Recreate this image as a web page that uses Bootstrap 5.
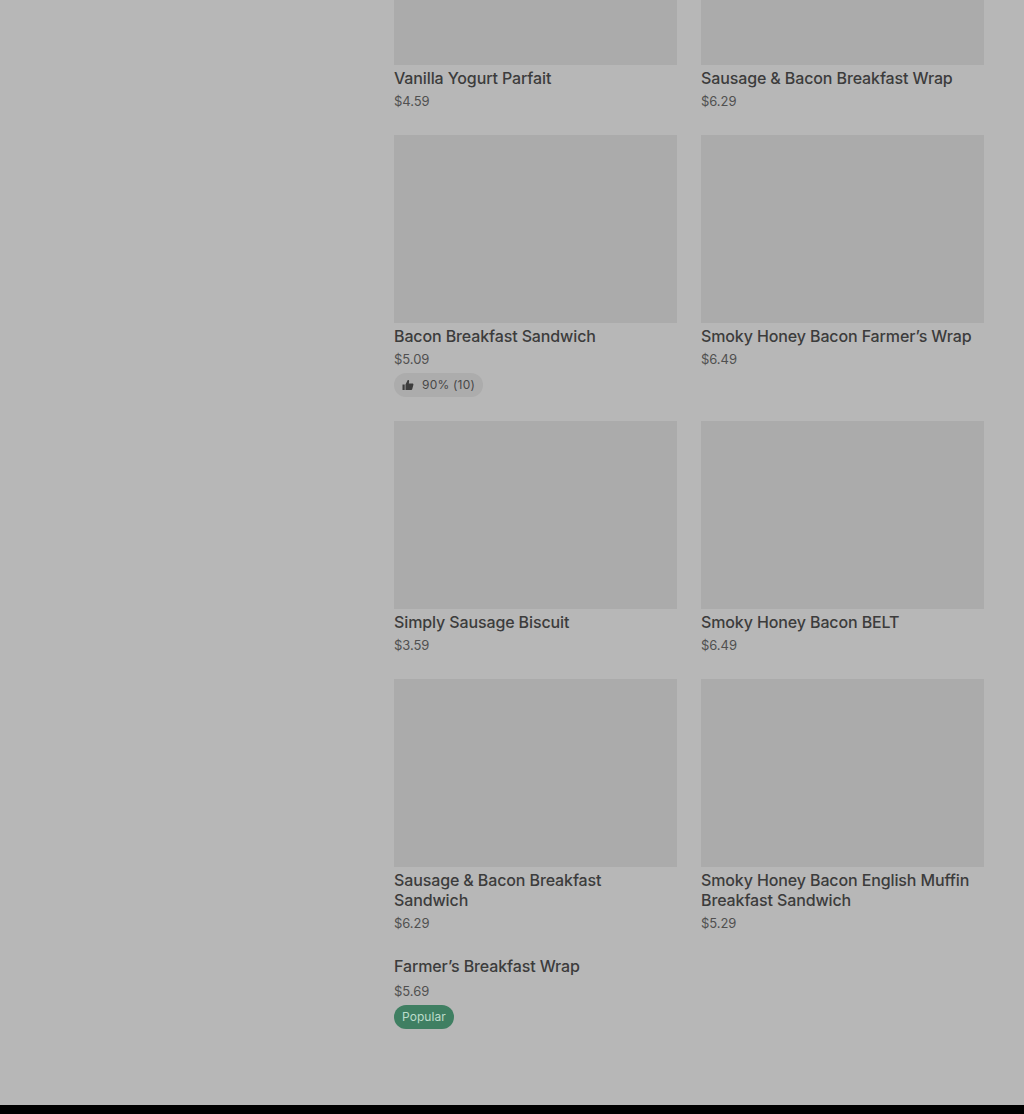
<!DOCTYPE html>
<html lang="en">
<head>
    <meta charset="UTF-8">
    <meta name="viewport" content="width=device-width, initial-scale=1.0">
    <title>Breakfast Menu</title>
    <link href="https://cdn.jsdelivr.net/npm/bootstrap@5.3.0/dist/css/bootstrap.min.css" rel="stylesheet">
    <script src="https://cdn.jsdelivr.net/npm/bootstrap@5.3.0/dist/js/bootstrap.bundle.min.js"></script>
    <style>
        body {
            background-color: #b7b7b7;
            font-family: "Inter", "Liberation Sans", sans-serif;
            height: 1114px;
            overflow: hidden;
        }
        .menu-side {
            width: 394px;
            flex: none;
        }
        .menu-main {
            width: 590px;
            flex: none;
            height: 1105px;
        }
        .food-pic {
            height: 188px;
            background-color: #ababab;
            margin-bottom: 3px;
        }
        .food-pic-cut {
            height: 65px;
        }
        .food-name {
            font-size: 16px;
            line-height: 20px;
            font-weight: 500;
            letter-spacing: -0.12px;
            color: #3c3c3c;
        }
        .food-price {
            font-size: 13px;
            line-height: 20px;
            margin-top: 3px;
            letter-spacing: -0.05px;
            color: #505050;
        }
        .food-last {
            margin-top: -1px;
        }
        .price-gap {
            margin-top: 5px;
        }
        .like-pill {
            height: 24px;
            margin-top: 4px;
            padding: 0 8px;
            background-color: #acacac;
            color: #484848;
            font-size: 12px;
            letter-spacing: 0.2px;
            gap: 8px;
        }
        .popular-pill {
            height: 24px;
            margin-top: 4px;
            padding: 0 8px;
            background-color: #3f7f62;
            color: #bcdccb;
            font-size: 12px;
            letter-spacing: 0.05px;
        }
        .page-foot {
            height: 9px;
            background-color: #000;
        }
    </style>
</head>
<body>
    <div class="d-flex">
        <div class="menu-side"></div>
        <div class="menu-main">
            <div class="row g-4">
                <div class="col-6">
                    <div class="food-pic food-pic-cut"></div>
                    <div class="food-name">Vanilla Yogurt Parfait</div>
                    <div class="food-price">$4.59</div>
                </div>
                <div class="col-6">
                    <div class="food-pic food-pic-cut"></div>
                    <div class="food-name">Sausage &amp; Bacon Breakfast Wrap</div>
                    <div class="food-price">$6.29</div>
                </div>
                <div class="col-6">
                    <div class="food-pic"></div>
                    <div class="food-name">Bacon Breakfast Sandwich</div>
                    <div class="food-price">$5.09</div>
                    <div class="like-pill d-inline-flex align-items-center rounded-pill">
                        <svg width="12" height="12" viewBox="0 0 12 12" fill="#3c3c3c"><path d="M0.5 5.5h2.2v5.5H0.5z"/><path d="M3.5 5.5 5.6 1.2c.9-.3 1.6.3 1.5 1.2L6.8 4.5h3.6c.8 0 1.2.6 1 1.3l-1.2 4.4c-.1.5-.5.8-1 .8H3.5z"/></svg>
                        <span>90% (10)</span>
                    </div>
                </div>
                <div class="col-6">
                    <div class="food-pic"></div>
                    <div class="food-name">Smoky Honey Bacon Farmer’s Wrap</div>
                    <div class="food-price">$6.49</div>
                </div>
                <div class="col-6">
                    <div class="food-pic"></div>
                    <div class="food-name">Simply Sausage Biscuit</div>
                    <div class="food-price">$3.59</div>
                </div>
                <div class="col-6">
                    <div class="food-pic"></div>
                    <div class="food-name">Smoky Honey Bacon BELT</div>
                    <div class="food-price">$6.49</div>
                </div>
                <div class="col-6">
                    <div class="food-pic"></div>
                    <div class="food-name">Sausage &amp; Bacon Breakfast Sandwich</div>
                    <div class="food-price">$6.29</div>
                </div>
                <div class="col-6">
                    <div class="food-pic"></div>
                    <div class="food-name">Smoky Honey Bacon English Muffin Breakfast Sandwich</div>
                    <div class="food-price">$5.29</div>
                </div>
                <div class="col-6">
                    <div class="food-last">
                        <div class="food-name">Farmer’s Breakfast Wrap</div>
                        <div class="food-price price-gap">$5.69</div>
                        <div class="popular-pill d-inline-flex align-items-center rounded-pill">Popular</div>
                    </div>
                </div>
            </div>
        </div>
    </div>
    <div class="page-foot"></div>
</body>
</html>
